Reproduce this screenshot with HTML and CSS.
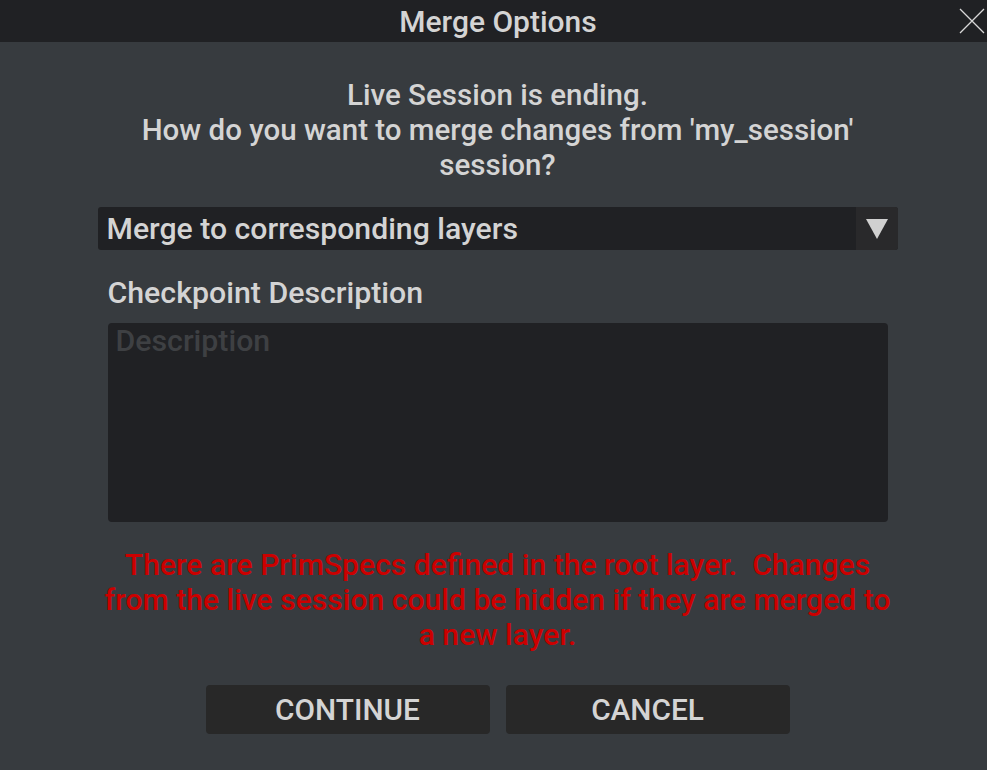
FILE: index.html
```html
<!DOCTYPE html>
<html lang="en">
<head>
    <meta charset="UTF-8">
    <title>Merge Options</title>
    <link rel="stylesheet" href="styles.css">
</head>
<body>
    <div class="dialog">
        <!-- Title bar -->
        <div class="title-bar">
            <span class="title">Merge Options</span>
            <svg class="close-icon" viewBox="0 0 26 26" xmlns="http://www.w3.org/2000/svg">
                <path d="M1 1L25 25M25 1L1 25" stroke="#d8d8d8" stroke-width="1.3" fill="none" />
            </svg>
        </div>

        <div class="content">
            <p class="message">Live Session is ending.<br>How do you want to merge changes from 'my_session'<br>session?</p>

            <div class="combo">
                <span class="combo-text">Merge to corresponding layers</span>
                <span class="combo-arrow">
                    <svg viewBox="0 0 24 22" xmlns="http://www.w3.org/2000/svg">
                        <path d="M1 1H23L12 21Z" fill="#d0d0d0" />
                    </svg>
                </span>
            </div>

            <div class="field">
                <div class="field-label">Checkpoint Description</div>
                <textarea class="description" placeholder="Description"></textarea>
            </div>

            <p class="warning">There are PrimSpecs defined in the root layer.&nbsp; Changes<br>from the live session could be hidden if they are merged to<br>a new layer.</p>

            <div class="buttons">
                <button class="btn">CONTINUE</button>
                <button class="btn">CANCEL</button>
            </div>
        </div>
    </div>
</body>
</html>
```

FILE: styles.css
```css
* {
    margin: 0;
    padding: 0;
    box-sizing: border-box;
    font-family: Roboto, 'Liberation Sans', sans-serif;
    font-weight: 500;
}

body {
    background-color: #373b3f;
    width: 987px;
    height: 770px;
    overflow: hidden;
}

.dialog {
    display: flex;
    flex-direction: column;
    height: 100%;
}

/* Title bar */
.title-bar {
    height: 42px;
    background-color: #202124;
    display: flex;
    align-items: center;
    justify-content: center;
    padding-left: 9px;
    position: relative;
}

.title {
    color: #d4d4d4;
    font-size: 30px;
}

.close-icon {
    position: absolute;
    right: 2px;
    top: 8px;
    width: 26px;
    height: 26px;
}

/* Main content */
.content {
    display: flex;
    flex-direction: column;
    align-items: center;
    padding-top: 36px;
    padding-left: 8px;
}

.message {
    color: #d4d4d4;
    font-size: 29.5px;
    line-height: 35px;
    text-align: center;
}

.combo {
    display: flex;
    width: 800px;
    height: 43px;
    margin-top: 24px;
    background-color: #202124;
    border-radius: 3px;
    overflow: hidden;
}

.combo-text {
    flex: 1;
    color: #d4d4d4;
    font-size: 30.2px;
    line-height: 43px;
    padding-left: 9px;
}

.combo-arrow {
    width: 42px;
    background-color: #29292b;
    display: flex;
    align-items: center;
    justify-content: center;
}

.combo-arrow svg {
    width: 24px;
    height: 22px;
}

.field {
    width: 780px;
    margin-top: 26px;
}

.field-label {
    color: #d4d4d4;
    font-size: 30.3px;
    line-height: 34px;
    margin-bottom: 13px;
}

.description {
    display: block;
    width: 780px;
    height: 199px;
    background-color: #202124;
    border: none;
    border-radius: 4px;
    resize: none;
    outline: none;
    color: #d4d4d4;
    font-size: 30.3px;
    padding: 0 8px;
}

.description::placeholder {
    color: #3e4043;
}

.warning {
    color: #cc0000;
    font-size: 30.1px;
    line-height: 35px;
    text-align: center;
    margin-top: 25px;
}

.buttons {
    display: flex;
    gap: 16px;
    margin-top: 33px;
}

.btn {
    width: 284px;
    height: 49px;
    background-color: #282828;
    border: none;
    border-radius: 4px;
    color: #d4d4d4;
    font-size: 29.8px;
}
```
